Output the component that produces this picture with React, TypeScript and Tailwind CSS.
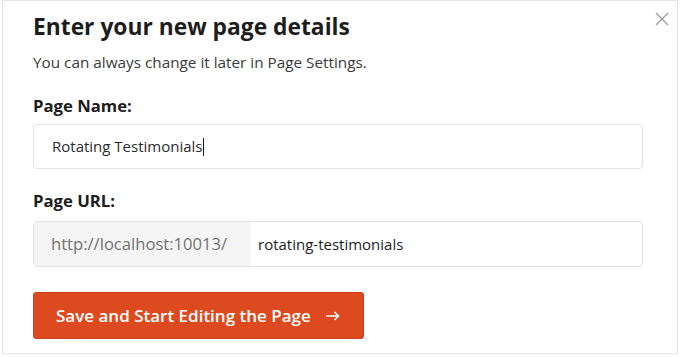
export default function App() {
  return (
    <div className="w-[680px] h-[357px] bg-white px-[2px] font-['Open_Sans',sans-serif]">
      <div className="relative h-[354px] border border-[#e6e6e6] bg-white pl-[30px] pr-[34px] pt-[11px]">
        <button className="absolute right-[8px] top-[11px] text-[#9a9a9a]" aria-label="Close">
          <svg width="14" height="14" viewBox="0 0 14 14" fill="none" stroke="currentColor" strokeWidth="1.3">
            <path d="M1 1L13 13M13 1L1 13" />
          </svg>
        </button>

        <h1 className="text-[22.8px] leading-[30px] font-bold text-[#1d1d1d]">Enter your new page details</h1>
        <p className="mt-[10px] text-[15.3px] leading-[20px] text-[#3a3a3a]">
          You can always change it later in Page Settings.
        </p>

        <label className="mt-[22px] block text-[16.7px] leading-[24px] font-bold text-[#1d1d1d]">Page Name:</label>
        <div className="mt-[6px] flex h-[45px] items-center rounded-[4px] border border-[#e2e2e2] px-[18px] text-[15px] text-[#2b2b2b]">
          Rotating Testimonials
          <span className="ml-[1px] inline-block h-[18px] w-px bg-[#1d1d1d]" />
        </div>

        <label className="mt-[20px] block text-[16.7px] leading-[24px] font-bold text-[#1d1d1d]">Page URL:</label>
        <div className="mt-[8px] flex h-[46px] overflow-hidden rounded-[4px] border border-[#e2e2e2] text-[15px]">
          <div className="flex w-[216px] items-center bg-[#f5f5f5] pl-[17px] text-[16.6px] text-[#727272]">
            http://localhost:10013/
          </div>
          <div className="flex flex-1 items-center pl-[8px] text-[#1d1d1d]">rotating-testimonials</div>
        </div>

        <button className="mt-[25px] flex h-[47px] w-[331px] items-center rounded-[3px] border border-[#c9401a] bg-[#dd4a1f] pl-[22px] text-[17px] font-semibold text-white">
          Save and Start Editing the Page
          <svg className="ml-[15px]" width="14" height="10" viewBox="0 0 14 10" fill="none" stroke="currentColor" strokeWidth="1.5">
            <path d="M0 5H12.5M8.5 1L12.5 5L8.5 9" />
          </svg>
        </button>
      </div>
    </div>
  );
}
